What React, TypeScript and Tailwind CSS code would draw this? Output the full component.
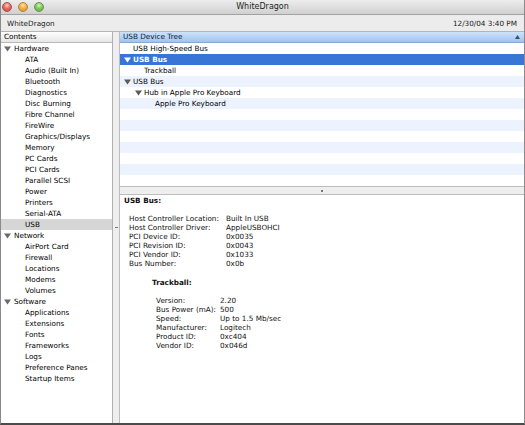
import React from "react";

const Tri = ({ color = "#5a5a5a" }: { color?: string }) => (
  <svg width="7" height="6" viewBox="0 0 7 6" className="shrink-0">
    <path d="M0 0.5 L7 0.5 L3.5 5.5 Z" fill={color} />
  </svg>
);

type SideItem = { label: string; group?: boolean; selected?: boolean };

const side: SideItem[] = [
  { label: "Hardware", group: true },
  { label: "ATA" },
  { label: "Audio (Built In)" },
  { label: "Bluetooth" },
  { label: "Diagnostics" },
  { label: "Disc Burning" },
  { label: "Fibre Channel" },
  { label: "FireWire" },
  { label: "Graphics/Displays" },
  { label: "Memory" },
  { label: "PC Cards" },
  { label: "PCI Cards" },
  { label: "Parallel SCSI" },
  { label: "Power" },
  { label: "Printers" },
  { label: "Serial-ATA" },
  { label: "USB", selected: true },
  { label: "Network", group: true },
  { label: "AirPort Card" },
  { label: "Firewall" },
  { label: "Locations" },
  { label: "Modems" },
  { label: "Volumes" },
  { label: "Software", group: true },
  { label: "Applications" },
  { label: "Extensions" },
  { label: "Fonts" },
  { label: "Frameworks" },
  { label: "Logs" },
  { label: "Preference Panes" },
  { label: "Startup Items" },
];

type TreeRow = { label: string; depth: number; tri?: boolean; selected?: boolean };
const tree: TreeRow[] = [
  { label: "USB High-Speed Bus", depth: 0 },
  { label: "USB Bus", depth: 0, tri: true, selected: true },
  { label: "Trackball", depth: 1 },
  { label: "USB Bus", depth: 0, tri: true },
  { label: "Hub in Apple Pro Keyboard", depth: 1, tri: true },
  { label: "Apple Pro Keyboard", depth: 2 },
];

const busProps: [string, string][] = [
  ["Host Controller Location:", "Built In USB"],
  ["Host Controller Driver:", "AppleUSBOHCI"],
  ["PCI Device ID:", "0x0035"],
  ["PCI Revision ID:", "0x0043"],
  ["PCI Vendor ID:", "0x1033"],
  ["Bus Number:", "0x0b"],
];

const tbProps: [string, string][] = [
  ["Version:", "2.20"],
  ["Bus Power (mA):", "500"],
  ["Speed:", "Up to 1.5 Mb/sec"],
  ["Manufacturer:", "Logitech"],
  ["Product ID:", "0xc404"],
  ["Vendor ID:", "0x046d"],
];

export default function App() {
  const rows = Array.from({ length: 13 }, (_, i) => tree[i]);
  return (
    <div className="w-[525px] h-[425px] flex flex-col overflow-hidden bg-white border-l border-r border-[#8a8a8a] border-b-2 border-b-[#4b4b4b] font-['DejaVu_Sans',sans-serif] text-[7.25px] leading-[11px] text-black">
      {/* title bar */}
      <div className="h-[15px] shrink-0 grid grid-cols-[1fr_auto_1fr] items-center bg-gradient-to-b from-[#ededed] to-[#d0d0d0] border-b border-[#a2a2a2]">
        <div className="flex items-center gap-[6px] pl-[1px]">
          <div className="w-[10px] h-[10px] rounded-full border border-[#b0504a] bg-[radial-gradient(circle_at_50%_30%,#fbd0cb_0%,#e66a62_45%,#c9433b_100%)]" />
          <div className="w-[10px] h-[10px] rounded-full border border-[#b98232] bg-[radial-gradient(circle_at_50%_30%,#fde6b8_0%,#efb04a_45%,#d68d26_100%)]" />
          <div className="w-[10px] h-[10px] rounded-full border border-[#5f9a44] bg-[radial-gradient(circle_at_50%_30%,#d6f2c4_0%,#84c663_45%,#5ea63e_100%)]" />
        </div>
        <div className="text-[8px] leading-[14px] text-[#1e1e1e]">WhiteDragon</div>
        <div />
      </div>
      {/* toolbar */}
      <div className="h-[17px] shrink-0 flex items-center justify-between pl-[6px] pr-[7px] bg-[#ececec] border-b border-[#b4b4b4] text-[#1a1a1a]">
        <span>WhiteDragon</span>
        <span>12/30/04 3:40 PM</span>
      </div>
      {/* main */}
      <div className="flex-1 flex min-h-0">
        {/* sidebar */}
        <div className="w-[112px] shrink-0 flex flex-col border-r border-[#b0b0b0] bg-white">
          <div className="h-[11px] shrink-0 pl-[3px] leading-[10px] bg-gradient-to-b from-white to-[#e6e6e6] border-b border-[#b8b8b8]">
            Contents
          </div>
          {side.map((s, i) =>
            s.group ? (
              <div key={i} className="h-[11px] flex items-center pl-[3px]">
                <div className="w-[10px] flex items-center">
                  <Tri color="#6a6a6a" />
                </div>
                <span>{s.label}</span>
              </div>
            ) : (
              <div
                key={i}
                className={
                  "h-[11px] pl-[24px] " + (s.selected ? "bg-[#d6d6d6]" : "")
                }
              >
                {s.label}
              </div>
            )
          )}
        </div>
        {/* vertical splitter */}
        <div className="w-[7px] shrink-0 flex items-center justify-center bg-[#eeeeee] border-r border-[#bdbdbd]">
          <div className="w-[3px] h-[1px] bg-[#777]" />
        </div>
        {/* right pane */}
        <div className="flex-1 min-w-0 flex flex-col">
          <div className="h-[11px] shrink-0 flex items-center justify-between pl-[3px] pr-[4px] bg-gradient-to-b from-[#cfe3fa] to-[#9ec4ef] border-b border-[#88a8d0] text-[#0c1a33]">
            <span className="leading-[10px]">USB Device Tree</span>
            <svg width="5" height="4" viewBox="0 0 5 4">
              <path d="M2.5 0 L5 4 L0 4 Z" fill="#3c4e6a" />
            </svg>
          </div>
          <div className="shrink-0 flex flex-col">
            {rows.map((r, i) => {
              const stripe = i % 2 === 1;
              const sel = r?.selected;
              const bg = sel ? "bg-[#3875d7] text-white" : stripe ? "bg-[#edf3fe]" : "bg-white";
              return (
                <div key={i} className={"h-[11px] flex items-center " + bg}>
                  {r && (
                    <div
                      className="flex items-center"
                      style={{ paddingLeft: 4 + r.depth * 11 }}
                    >
                      <div className="w-[9px] flex items-center">
                        {r.tri && <Tri color={sel ? "#ffffff" : "#5a5a5a"} />}
                      </div>
                      <span className={sel ? "font-bold" : ""}>{r.label}</span>
                    </div>
                  )}
                </div>
              );
            })}
          </div>
          {/* horizontal splitter */}
          <div className="h-[9px] shrink-0 flex items-center justify-center bg-[#eeeeee] border-t border-b border-[#bdbdbd]">
            <div className="w-[2px] h-[2px] bg-[#777]" />
          </div>
          {/* details */}
          <div className="flex-1 bg-white pt-[1px] pl-[4px] leading-[9px] text-[#111]">
            <div className="font-bold">USB Bus:</div>
            <div className="mt-[9px] pl-[5px] grid grid-cols-[97px_1fr]">
              {busProps.map(([k, v]) => (
                <React.Fragment key={k}>
                  <span>{k}</span>
                  <span>{v}</span>
                </React.Fragment>
              ))}
            </div>
            <div className="mt-[10px] pl-[28px] font-bold">Trackball:</div>
            <div className="mt-[9px] pl-[32px] grid grid-cols-[64px_1fr]">
              {tbProps.map(([k, v]) => (
                <React.Fragment key={k}>
                  <span>{k}</span>
                  <span>{v}</span>
                </React.Fragment>
              ))}
            </div>
          </div>
        </div>
      </div>
    </div>
  );
}
